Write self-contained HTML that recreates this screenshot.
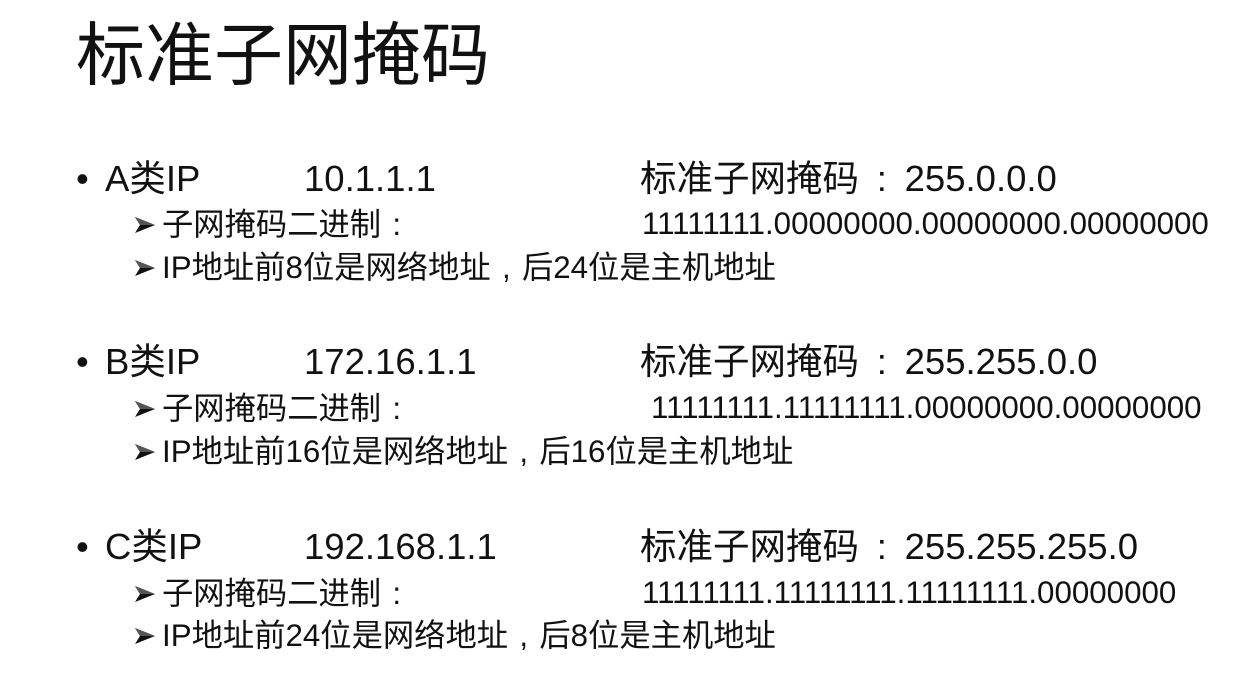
<!DOCTYPE html>
<html><head><meta charset="utf-8"><style>
body{margin:0;width:1258px;height:692px;background:#fff;overflow:hidden;position:relative;font-family:"Liberation Sans","Noto Sans CJK SC",sans-serif;color:#111}
div{position:absolute;white-space:nowrap}
.t{font-size:69px;line-height:69px;left:76px;top:21px}
.m{font-size:36.5px;line-height:36px}
.s{font-size:31.3px;line-height:30px}
.c{display:inline-block;width:1em;text-align:center}
.m .c{width:1.25em}
.a{display:inline-block;width:28px;vertical-align:1px}
</style></head><body>
<div class="t">标准子网掩码</div>

<div class="m" style="left:76px;top:161px">•</div><div class="m" style="left:105px;top:161px">A类IP</div>
<div class="m" style="left:304px;top:161px">10.1.1.1</div>
<div class="m" style="left:640px;top:161px">标准子网掩码<span class="c">:</span>255.0.0.0</div>
<div class="s" style="left:134px;top:209px"><span class="a"><svg width="22" height="18" viewBox="0 0 22 18"><path d="M1 1L21 9L1 17L6 9Z" fill="#111"/><path d="M1 1L21 9L6 9Z" fill="#555"/></svg></span>子网掩码二进制<span class="c">:</span></div>
<div class="s" style="left:642px;top:209px">11111111.00000000.00000000.00000000</div>
<div class="s" style="left:134px;top:252px"><span class="a"><svg width="22" height="18" viewBox="0 0 22 18"><path d="M1 1L21 9L1 17L6 9Z" fill="#111"/><path d="M1 1L21 9L6 9Z" fill="#555"/></svg></span>IP地址前8位是网络地址<span class="c">,</span>后24位是主机地址</div>

<div class="m" style="left:76px;top:344px">•</div><div class="m" style="left:105px;top:344px">B类IP</div>
<div class="m" style="left:304px;top:344px">172.16.1.1</div>
<div class="m" style="left:640px;top:344px">标准子网掩码<span class="c">:</span>255.255.0.0</div>
<div class="s" style="left:134px;top:393px"><span class="a"><svg width="22" height="18" viewBox="0 0 22 18"><path d="M1 1L21 9L1 17L6 9Z" fill="#111"/><path d="M1 1L21 9L6 9Z" fill="#555"/></svg></span>子网掩码二进制<span class="c">:</span></div>
<div class="s" style="left:651px;top:393px">11111111.11111111.00000000.00000000</div>
<div class="s" style="left:134px;top:436px"><span class="a"><svg width="22" height="18" viewBox="0 0 22 18"><path d="M1 1L21 9L1 17L6 9Z" fill="#111"/><path d="M1 1L21 9L6 9Z" fill="#555"/></svg></span>IP地址前16位是网络地址<span class="c">,</span>后16位是主机地址</div>

<div class="m" style="left:76px;top:529px">•</div><div class="m" style="left:105px;top:529px">C类IP</div>
<div class="m" style="left:304px;top:529px">192.168.1.1</div>
<div class="m" style="left:640px;top:529px">标准子网掩码<span class="c">:</span>255.255.255.0</div>
<div class="s" style="left:134px;top:578px"><span class="a"><svg width="22" height="18" viewBox="0 0 22 18"><path d="M1 1L21 9L1 17L6 9Z" fill="#111"/><path d="M1 1L21 9L6 9Z" fill="#555"/></svg></span>子网掩码二进制<span class="c">:</span></div>
<div class="s" style="left:642px;top:578px">11111111.11111111.11111111.00000000</div>
<div class="s" style="left:134px;top:620px"><span class="a"><svg width="22" height="18" viewBox="0 0 22 18"><path d="M1 1L21 9L1 17L6 9Z" fill="#111"/><path d="M1 1L21 9L6 9Z" fill="#555"/></svg></span>IP地址前24位是网络地址<span class="c">,</span>后8位是主机地址</div>
</body></html>
